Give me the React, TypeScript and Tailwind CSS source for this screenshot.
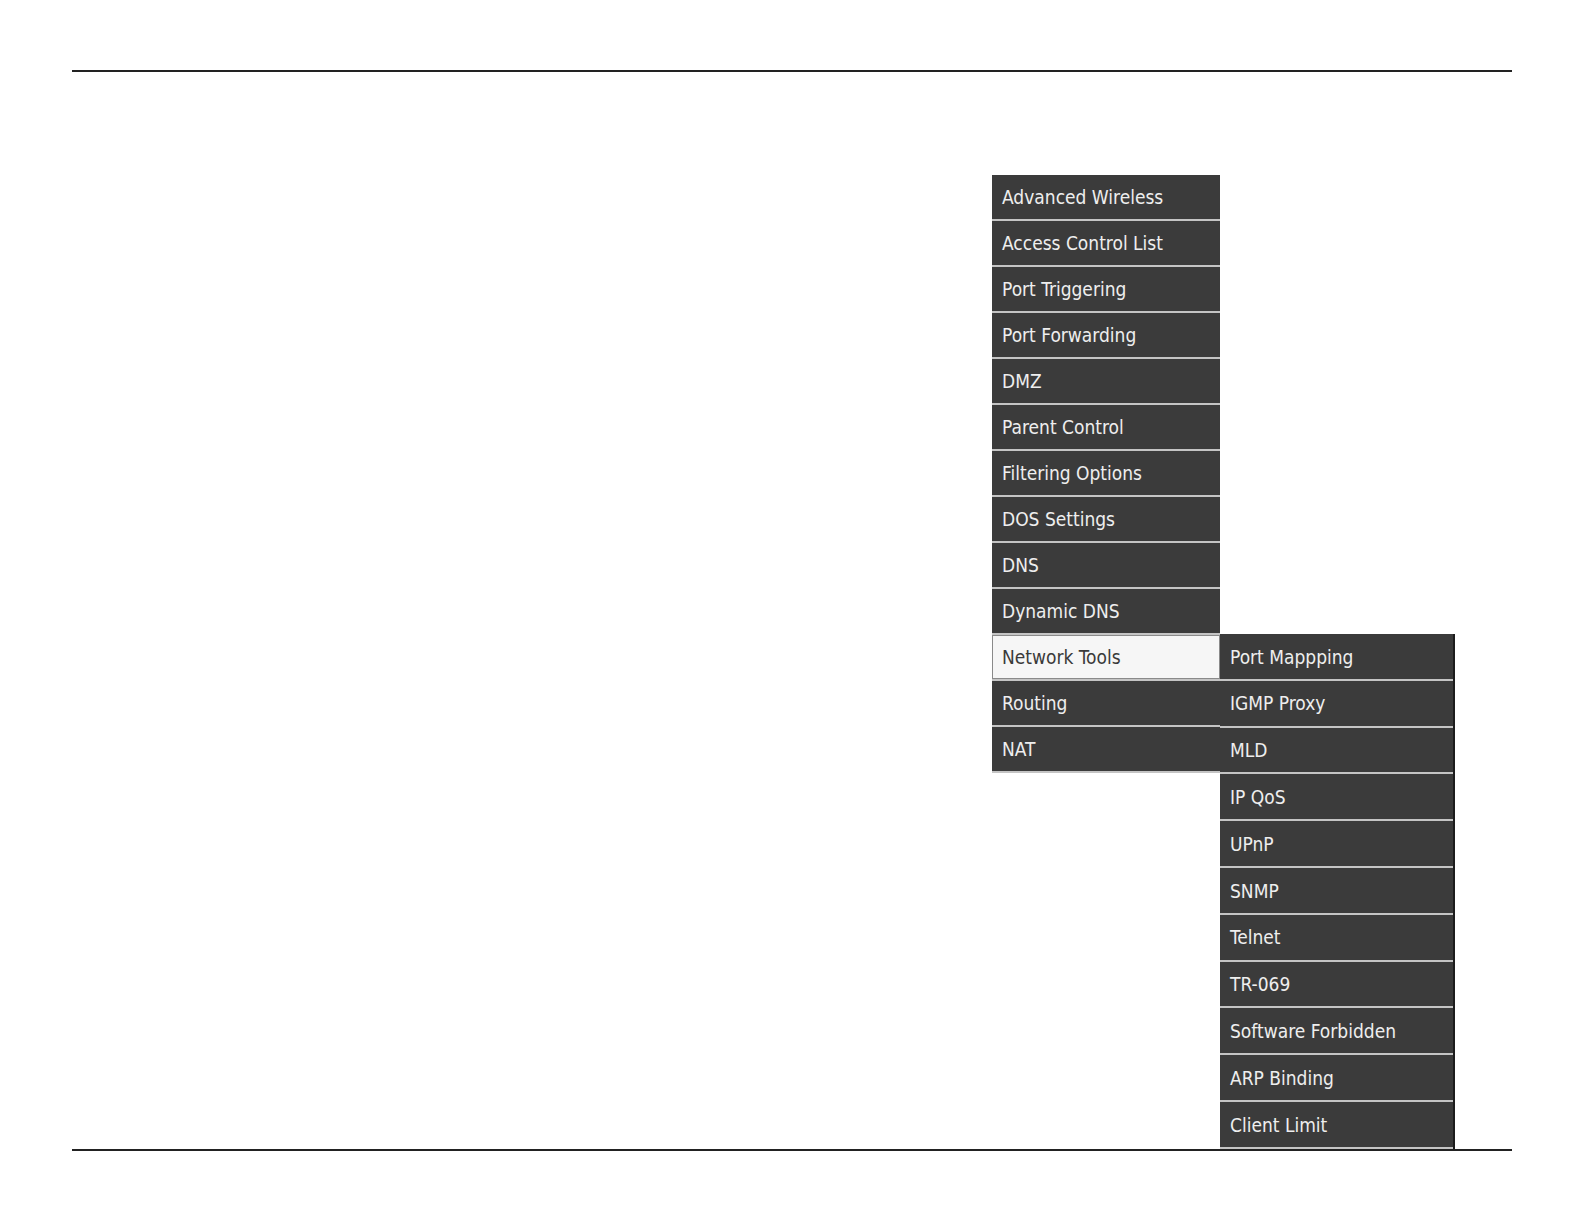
const mainItems = [
  'Advanced Wireless',
  'Access Control List',
  'Port Triggering',
  'Port Forwarding',
  'DMZ',
  'Parent Control',
  'Filtering Options',
  'DOS Settings',
  'DNS',
  'Dynamic DNS',
  'Network Tools',
  'Routing',
  'NAT',
];

const subItems = [
  'Port Mappping',
  'IGMP Proxy',
  'MLD',
  'IP QoS',
  'UPnP',
  'SNMP',
  'Telnet',
  'TR-069',
  'Software Forbidden',
  'ARP Binding',
  'Client Limit',
];

const font = "font-['DejaVu_Sans_Condensed','DejaVu_Sans',sans-serif]";

function MenuRow({ label, active }: { label: string; active?: boolean }) {
  if (active) {
    return (
      <div className="h-[46px] border-b-2 border-[#c4c4c4] bg-[#3b3b3b]">
        <div className="h-full flex items-center px-[9px] pt-px bg-[#f6f6f6] border border-[#8a8a8a] text-[#3a3a3a]">
          {label}
        </div>
      </div>
    );
  }
  return (
    <div className="h-[46px] flex items-center px-[10px] pt-px border-b-2 border-[#c4c4c4] bg-[#3b3b3b] text-[#eeeeee]">
      {label}
    </div>
  );
}

export default function App() {
  return (
    <div className={`w-full h-[1224px] bg-white ${font} text-[19px]`}>
      <div className="pt-[70px] px-[72px]">
        <div className="h-[2px] w-[1440px] bg-[#222222]" />
        <div className="flex mt-[103px] pl-[920px]">
          <div className="w-[228px]">
            {mainItems.map((item) => (
              <MenuRow key={item} label={item} active={item === 'Network Tools'} />
            ))}
          </div>
          <div className="w-[235px] mt-[459px] bg-[#3b3b3b] border-r-2 border-[#1c1c1c]">
            {subItems.map((item) => (
              <div
                key={item}
                className="h-[46.8px] flex items-center px-[10px] pt-px border-b-2 border-[#c4c4c4] text-[#eeeeee]"
              >
                {item}
              </div>
            ))}
          </div>
        </div>
        <div className="h-[2px] w-[1440px] bg-[#222222]" />
      </div>
    </div>
  );
}
